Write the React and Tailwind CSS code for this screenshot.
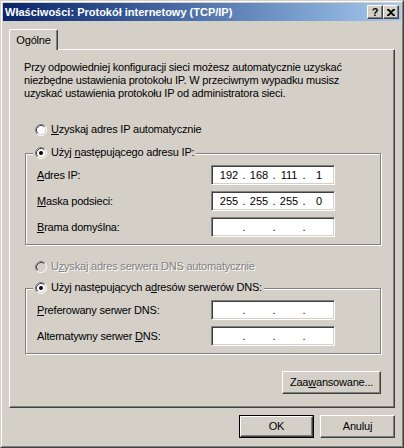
import React from "react";

const Radio = ({ checked, disabled }) => (
  <svg width="12" height="12" viewBox="0 0 12 12" className="shrink-0">
    <circle cx="6" cy="6" r="5" fill={disabled ? "#d4d0c8" : "#fff"} />
    <path d="M2.11 9.89A5.5 5.5 0 0 1 9.89 2.11" stroke="#808080" fill="none" />
    <path d="M9.89 2.11A5.5 5.5 0 0 1 2.11 9.89" stroke="#fff" fill="none" />
    <path d="M2.82 9.18A4.5 4.5 0 0 1 9.18 2.82" stroke="#404040" fill="none" />
    <path d="M9.18 2.82A4.5 4.5 0 0 1 2.82 9.18" stroke="#d4d0c8" fill="none" />
    {checked && <circle cx="6" cy="6" r="2" fill={disabled ? "#808080" : "#000"} />}
  </svg>
);

const IpField = ({ value = ["", "", "", ""] }) => (
  <div className="w-[124px] h-[20px] bg-white border border-t-[#808080] border-l-[#808080] border-r-white border-b-white shadow-[inset_1px_1px_0_#404040,inset_-1px_-1px_0_#d4d0c8] flex items-center pl-[4px] tracking-normal">
    {value.map((v, i) => (
      <React.Fragment key={i}>
        <span className="w-[26px] text-center">{v}</span>
        {i < 3 && <span className="w-[4px] text-center">.</span>}
      </React.Fragment>
    ))}
  </div>
);

const Row = ({ label, value }) => (
  <div className="flex items-center h-[20px] pl-[11px]">
    <span className="w-[174px] whitespace-nowrap">{label}</span>
    <IpField value={value} />
  </div>
);

const Group = ({ legend, children }) => (
  <div className="relative ml-[15px] w-[356px] border border-[#808080] shadow-[inset_1px_1px_0_#fff,1px_1px_0_#fff] pt-[11px] pb-[7px] flex flex-col gap-[6px]">
    <div className="absolute left-[7px] top-[-8px] h-[13px] flex items-center gap-[4px] bg-[#d4d0c8] px-[2px] whitespace-nowrap">
      <Radio checked />
      <span>{legend}</span>
    </div>
    {children}
  </div>
);

const Button = ({ children, primary, className = "" }) =>
  primary ? (
    <div className={`h-[23px] border border-black flex ${className}`}>
      <div className="flex-1 flex items-center justify-center border border-t-white border-l-white border-r-[#404040] border-b-[#404040] shadow-[inset_-1px_-1px_0_#808080]">
        {children}
      </div>
    </div>
  ) : (
    <div className={`h-[23px] flex items-center justify-center border border-t-white border-l-white border-r-[#404040] border-b-[#404040] shadow-[inset_-1px_-1px_0_#808080] ${className}`}>
      {children}
    </div>
  );

const CapButton = ({ children }) => (
  <div className="w-[16px] h-[14px] bg-[#d4d0c8] flex items-center justify-center border border-t-white border-l-white border-r-[#404040] border-b-[#404040] shadow-[inset_-1px_-1px_0_#808080] text-black font-bold text-[11px] leading-none tracking-normal">
    {children}
  </div>
);

export default function App() {
  return (
    <div className="w-[404px] h-[448px] bg-[#d4d0c8] border border-t-[#d4d0c8] border-l-[#d4d0c8] border-r-[#404040] border-b-[#404040] font-['Liberation_Sans',Arial,sans-serif] text-[11px] leading-[13px] tracking-[-0.2px] text-black">
      <div className="h-full border border-t-white border-l-white border-r-[#808080] border-b-[#808080] p-[1px] flex flex-col">
        {/* title bar */}
        <div className="h-[18px] flex items-center bg-linear-to-r from-[#0a246a] to-[#a6caf0] pl-[2px] pr-[2px]">
          <span className="flex-1 text-white font-bold text-[11px] tracking-normal whitespace-nowrap">
            Właściwości: Protokół internetowy (TCP/IP)
          </span>
          <CapButton>?</CapButton>
          <CapButton>
            <svg width="8" height="7" viewBox="0 0 8 7">
              <path d="M0 0h2l2 2 2-2h2v1L5 3.5 8 6v1H6L4 5 2 7H0V6l3-2.5L0 1z" fill="#000" />
            </svg>
          </CapButton>
        </div>

        <div className="flex-1 px-[6px] pt-[8px] flex flex-col">
          {/* tab */}
          <div className="relative z-10 w-[49px] h-[21px] -mb-[1px] bg-[#d4d0c8] border-l border-t border-r border-l-white border-t-white border-r-[#404040] rounded-t-[2px] shadow-[inset_-1px_0_0_#808080] flex items-center justify-center">
            Ogólne
          </div>

          {/* panel */}
          <div className="h-[359px] border border-t-white border-l-white border-r-[#404040] border-b-[#404040] shadow-[inset_-1px_-1px_0_#808080] flex flex-col pt-[11px]">
            <div className="pl-[14px] whitespace-nowrap">
              <div>Przy odpowiedniej konfiguracji sieci możesz automatycznie uzyskać</div>
              <div>niezbędne ustawienia protokołu IP. W przeciwnym wypadku musisz</div>
              <div>uzyskać ustawienia protokołu IP od administratora sieci.</div>
            </div>

            <div className="mt-[23px] ml-[25px] h-[13px] flex items-center gap-[4px]">
              <Radio />
              <span>
                <u>U</u>zyskaj adres IP automatycznie
              </span>
            </div>

            <div className="mt-[17px]">
              <Group
                legend={
                  <>
                    Użyj <u>n</u>astępującego adresu IP:
                  </>
                }
              >
                <Row label={<><u>A</u>dres IP:</>} value={["192", "168", "111", "1"]} />
                <Row label={<><u>M</u>aska podsieci:</>} value={["255", "255", "255", "0"]} />
                <Row label={<><u>B</u>rama domyślna:</>} />
              </Group>
            </div>

            <div className="mt-[15px] ml-[25px] h-[13px] flex items-center gap-[4px] text-[#808080] [text-shadow:1px_1px_0_#fff]">
              <Radio disabled />
              <span>
                U<u>z</u>yskaj adres serwera DNS automatycznie
              </span>
            </div>

            <div className="mt-[15px]">
              <Group
                legend={
                  <>
                    Użyj następujących a<u>d</u>resów serwerów DNS:
                  </>
                }
              >
                <Row label={<><u>P</u>referowany serwer DNS:</>} />
                <Row label={<>Alternatywny serwer <u>D</u>NS:</>} />
              </Group>
            </div>

            <div className="mt-[17px] flex justify-end pr-[13px]">
              <Button className="w-[99px]">
                <span>
                  Zaa<u>w</u>ansowane...
                </span>
              </Button>
            </div>
          </div>

          {/* dialog buttons */}
          <div className="mt-[7px] flex justify-end gap-[6px]">
            <Button primary className="w-[75px]">OK</Button>
            <Button className="w-[75px]">Anuluj</Button>
          </div>
        </div>
      </div>
    </div>
  );
}
